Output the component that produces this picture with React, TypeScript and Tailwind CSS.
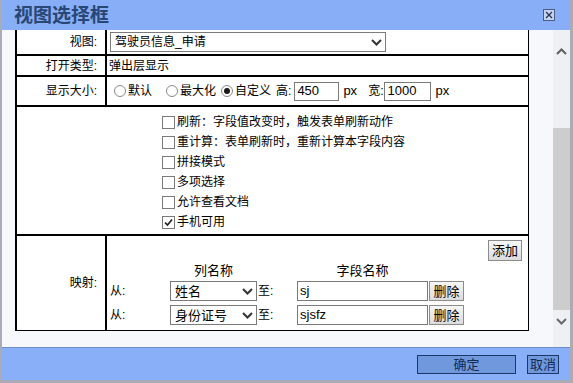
import React from "react";

const checks = [
  { label: "刷新：字段值改变时，触发表单刷新动作", checked: false },
  { label: "重计算：表单刷新时，重新计算本字段内容", checked: false },
  { label: "拼接模式", checked: false },
  { label: "多项选择", checked: false },
  { label: "允许查看文档", checked: false },
  { label: "手机可用", checked: true },
];

const mappings = [
  { column: "姓名", field: "sj" },
  { column: "身份证号", field: "sjsfz" },
];

function Chevron({ className }: { className?: string }) {
  return (
    <svg width="11" height="7" viewBox="0 0 11 7" className={className}>
      <polyline points="1,1 5.5,5.5 10,1" fill="none" stroke="#333" strokeWidth="2" />
    </svg>
  );
}

function FakeSelect({ value, width }: { value: string; width: string }) {
  return (
    <div className={`flex h-[20px] items-center justify-between border border-[#7a7a7a] bg-white pl-[4px] pr-[3px] ${width}`}>
      <span className="truncate leading-[17px]">{value}</span>
      <Chevron />
    </div>
  );
}

function Radio({ on }: { on?: boolean }) {
  return (
    <span className="flex h-[12px] w-[12px] shrink-0 items-center justify-center rounded-full border border-[#8a8a8a] bg-white">
      {on && <span className="h-[6px] w-[6px] rounded-full bg-[#1a1a1a]" />}
    </span>
  );
}

function Check({ label, checked }: { label: string; checked?: boolean }) {
  return (
    <div className="flex h-[20px] items-center">
      <span className="flex h-[13px] w-[13px] items-center justify-center border border-[#7a7a7a] bg-white">
        {checked && (
          <svg width="9" height="9" viewBox="0 0 9 9">
            <path d="M1 4.5 L3.5 7 L8 1.5" fill="none" stroke="#222" strokeWidth="1.7" />
          </svg>
        )}
      </span>
      <span className="ml-[2px] leading-none">{label}</span>
    </div>
  );
}

function Row({ label, height, children }: { label: string; height: string; children: React.ReactNode }) {
  return (
    <div className={`flex ${height}`}>
      <div className="flex w-[88px] items-center justify-end pr-[8px]">{label}</div>
      <div className="w-[2px] bg-black" />
      <div className="flex flex-1 items-center">{children}</div>
    </div>
  );
}

const rule = <div className="h-[2px] bg-black" />;

const grayBtn =
  "flex items-center justify-center border border-[#8c8c8c] bg-gradient-to-b from-[#f6f6f6] to-[#dcdcdc] leading-none text-black";

export default function App() {
  return (
    <div className="flex h-[383px] w-[573px] flex-col bg-[#a9acb7] pb-[3px] pl-[2px] pr-[3px] text-[12px] text-black [font-family:'Liberation_Sans','Noto_Sans_CJK_SC',sans-serif]">
      {/* title bar */}
      <div className="flex h-[30px] items-center justify-between bg-[#87aef7] pl-[12px] pr-[15px]">
        <span className="text-[19px] font-bold leading-none text-[#294774]">视图选择框</span>
        <span className="flex h-[12px] w-[12px] items-center justify-center border border-[#4b5c82] bg-[#c5d4f0]">
          <svg width="8" height="8" viewBox="0 0 8 8">
            <path d="M1 1 L7 7 M7 1 L1 7" stroke="#2b3553" strokeWidth="1.3" />
          </svg>
        </span>
      </div>

      {/* body */}
      <div className="flex flex-1 bg-[#f6f8fb]">
        <div className="flex-1 pl-[13px]">
          <div className="w-[514px] border-b border-l-2 border-r border-black bg-white">
            <Row label="视图:" height="h-[24px]">
              <div className="ml-[3px] self-start pt-[2px]">
                <FakeSelect value="驾驶员信息_申请" width="w-[276px]" />
              </div>
            </Row>
            {rule}
            <Row label="打开类型:" height="h-[19px]">
              <span className="ml-[2px]">弹出层显示</span>
            </Row>
            {rule}
            <Row label="显示大小:" height="h-[28px]">
              <div className="ml-[7px] flex items-center">
                <Radio />
                <span className="ml-[2px]">默认</span>
                <span className="ml-[14px]"><Radio /></span>
                <span className="ml-[2px]">最大化</span>
                <span className="ml-[5px]"><Radio on /></span>
                <span className="ml-[2px]">自定义</span>
                <span className="ml-[5px]">高:</span>
                <div className="ml-[3px] flex h-[19px] w-[45px] items-center border border-[#7a7a7a] bg-white pl-[2px] text-[13px]">450</div>
                <span className="ml-[4px] text-[13px]">px</span>
                <span className="ml-[11px]">宽:</span>
                <div className="ml-[1px] flex h-[19px] w-[47px] items-center border border-[#7a7a7a] bg-white pl-[2px] text-[13px]">1000</div>
                <span className="ml-[4px] text-[13px]">px</span>
              </div>
            </Row>
            {rule}
            <div className="h-[127px] pl-[145px] pt-[5px]">
              {checks.map((c) => (
                <Check key={c.label} label={c.label} checked={c.checked} />
              ))}
            </div>
            {rule}
            <Row label="映射:" height="h-[94px]">
              <div className="flex h-full flex-1 flex-col pl-[3px] pt-[4px]">
                <div className="flex justify-end pr-[6px]">
                  <button className={`${grayBtn} h-[21px] w-[34px] text-[13px]`}>添加</button>
                </div>
                <div className="flex h-[20px] items-center text-[13px]">
                  <span className="ml-[60px] w-[87px] text-center">列名称</span>
                  <span className="ml-[40px] w-[131px] text-center">字段名称</span>
                </div>
                <div className="flex flex-col gap-[4px]">
                  {mappings.map((m) => (
                    <div key={m.field} className="flex h-[20px] items-center">
                      <span className="w-[60px]">从:</span>
                      <FakeSelect value={m.column} width="w-[87px] text-[13px]" />
                      <span className="w-[40px] pl-[1px]">至:</span>
                      <div className="flex h-[20px] w-[131px] items-center border border-[#7a7a7a] bg-white pl-[2px] text-[13px]">{m.field}</div>
                      <button className={`${grayBtn} ml-[1px] h-[20px] w-[35px] text-[13px]`}>删除</button>
                    </div>
                  ))}
                </div>
              </div>
            </Row>
          </div>
        </div>

        {/* scrollbar */}
        <div className="flex w-[17px] flex-col items-center bg-[#eef0f4]">
          <svg width="11" height="7" viewBox="0 0 11 7" className="mt-[18px]">
            <polyline points="1,6 5.5,1.5 10,6" fill="none" stroke="#606060" strokeWidth="2" />
          </svg>
          <div className="mt-[73px] h-[182px] w-full bg-[#cdcdcd]" />
          <Chevron className="mt-[8px] opacity-70" />
        </div>
      </div>

      {/* footer */}
      <div className="flex h-[33px] items-center justify-end gap-[11px] border-t border-[#6f8fc8] bg-[#89aff9] pr-[11px]">
        <button className="flex h-[19px] w-[99px] items-center justify-center border border-[#1d3766] bg-[#6f98dd] text-[13px] leading-none text-[#13294f]">确定</button>
        <button className="flex h-[19px] w-[32px] items-center justify-center border border-[#1d3766] bg-[#6f98dd] text-[13px] leading-none text-[#13294f]">取消</button>
      </div>
    </div>
  );
}
